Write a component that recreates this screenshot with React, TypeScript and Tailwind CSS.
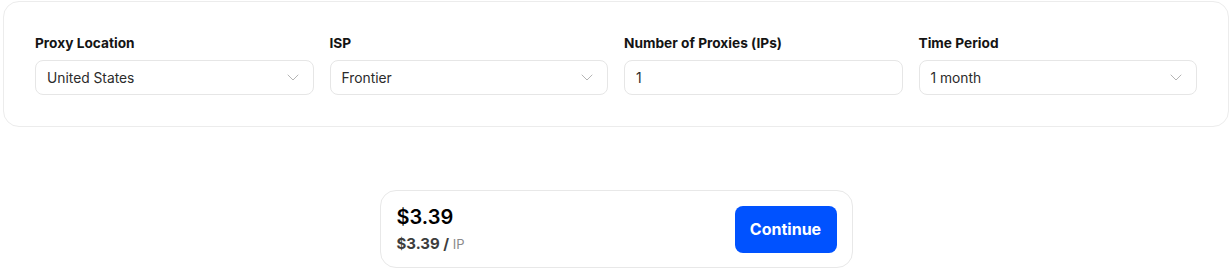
import React from "react";

const Chevron = () => (
  <svg width="12" height="7" viewBox="0 0 12 7" fill="none" className="shrink-0">
    <path d="M1 1l5 5 5-5" stroke="#b5b5b5" strokeWidth="1" strokeLinecap="round" strokeLinejoin="round" />
  </svg>
);

const Field = ({ label, value, select }: { label: string; value: string; select?: boolean }) => (
  <div className="flex flex-col">
    <div className="text-[13.7px] leading-5 font-bold text-[#141414] mb-[7px]">{label}</div>
    <div className="h-[35px] rounded-lg border border-[#e6e6e6] bg-white flex items-center justify-between pl-[11px] pr-[14px]">
      <span className="text-[13.8px] leading-5 pt-px text-[#2b2b2b]">{value}</span>
      {select && <Chevron />}
    </div>
  </div>
);

export default function App() {
  return (
    <div className="w-[1230px] h-[278px] bg-white" style={{ fontFamily: "Inter, 'Noto Sans', sans-serif" }}>
      <div className="ml-[3px] mr-px mt-px rounded-2xl border border-[#ececec] px-[31px] pt-[31px] pb-[31px] grid grid-cols-4 gap-x-4">
        <Field label="Proxy Location" value="United States" select />
        <Field label="ISP" value="Frontier" select />
        <Field label="Number of Proxies (IPs)" value="1" />
        <Field label="Time Period" value="1 month" select />
      </div>
      <div className="flex justify-center mt-[63px] pl-[2px]">
        <div className="w-[473px] h-[78px] rounded-2xl border border-[#e8e8e8] bg-white p-[15px] flex items-center justify-between">
          <div className="flex flex-col pl-px">
            <div className="text-[20px] leading-[26px] font-semibold text-black">$3.39</div>
            <div className="leading-5 mt-[3px]">
              <span className="text-[15px] font-bold text-[#3d3d3d]">$3.39 / </span>
              <span className="text-[13px] text-[#8a8a8a]">IP</span>
            </div>
          </div>
          <button className="h-[47px] w-[102px] rounded-lg bg-[#0052ff] text-white text-[16px] font-bold">Continue</button>
        </div>
      </div>
    </div>
  );
}
